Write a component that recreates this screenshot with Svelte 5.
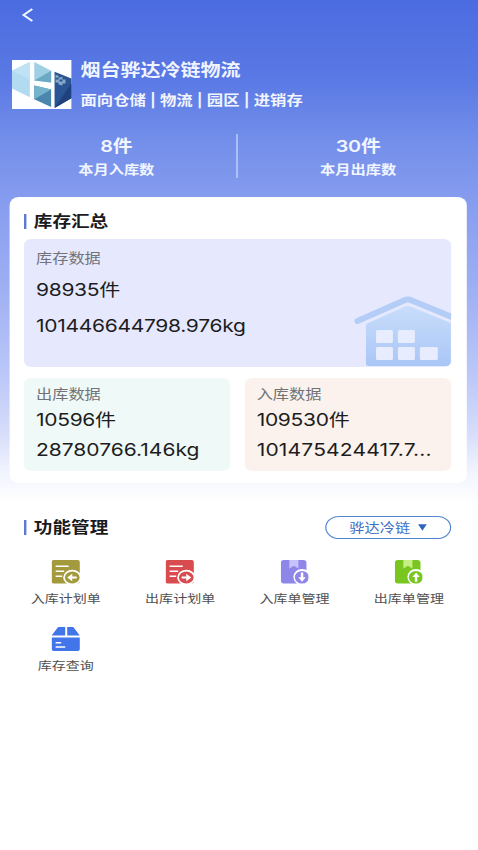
<script lang="ts">
	/**
	 * Warehouse dashboard
	 * Company header, monthly totals, stock summary and function shortcuts
	 */

	const monthly = [
		{ value: '8件', label: '本月入库数' },
		{ value: '30件', label: '本月出库数' }
	];

	const flows = [
		{ kind: 'out', label: '出库数据', count: '10596件', weight: '28780766.146kg' },
		{ kind: 'in', label: '入库数据', count: '109530件', weight: '101475424417.7...' }
	];

	const functions = [
		{ icon: 'plan-in', label: '入库计划单' },
		{ icon: 'plan-out', label: '出库计划单' },
		{ icon: 'order-in', label: '入库单管理' },
		{ icon: 'order-out', label: '出库单管理' },
		{ icon: 'stock', label: '库存查询' }
	];
</script>

<div class="screen">
	<header class="nav">
		<button class="back" aria-label="返回">
			<svg viewBox="0 0 12 16"><path d="M10.2 1.2 1.8 8l8.400 6.800" /></svg>
		</button>
	</header>

	<section class="company">
		<svg class="logo" viewBox="0 0 60 50" preserveAspectRatio="none">
			<rect width="60" height="50" fill="#fdfeff" />
			<path d="M0 11 18 2v36L0 29z" fill="#b2daf0" />
			<path d="M0 11 18 2v18z" fill="#bfe2f5" />
			<path d="M22.500 2 39.500 11v12l-17-2z" fill="#9fcfe3" />
			<path d="M39.500 11v12l-17-2z" fill="#6aaac5" />
			<path d="M22.500 26 39.500 30v18l-17-8z" fill="#4a86ad" />
			<path d="M22.500 26 39.500 30l-17 10z" fill="#74b3cc" />
			<path d="M43 12 60 19v20l-17 10z" fill="#2a5494" />
			<path d="M43 49 60 24v15z" fill="#1f417c" />
			<path d="M44 15l3 1v2l4-1v3h3v4h-3v2l-4-1v-2h-3z" fill="#86a9c6" />
			<path d="M44 18h3v2h-3zM48 20h3v2h-3z" fill="#2a5494" />
		</svg>
		<div>
			<h1>烟台骅达冷链物流</h1>
			<p>面向仓储 | 物流 | 园区 | 进销存</p>
		</div>
	</section>

	<section class="monthly">
		{#each monthly as item}
			<div class="month-item">
				<strong>{item.value}</strong>
				<span>{item.label}</span>
			</div>
		{/each}
	</section>

	<section class="card">
		<h2>库存汇总</h2>
		<div class="panel stock">
			<span class="label">库存数据</span>
			<span class="number">98935件</span>
			<span class="number">101446644798.976kg</span>
			<svg class="house" viewBox="0 0 98 74" preserveAspectRatio="none">
				<defs>
					<linearGradient id="house-body" x1="0" y1="0" x2="0" y2="1">
						<stop offset="0" stop-color="#c9ddfb" />
						<stop offset="1" stop-color="#a9c6f6" />
					</linearGradient>
				</defs>
				<path d="M3.500 28 50 7.500Q54 5.500 58 7.500L98 24" fill="none" stroke="#b4cdf7" stroke-width="6" stroke-linecap="round" />
				<path d="M12 31 51 13.500q3-1 6 0L97 30v40q0 3-3 3H15q-3 0-3-3z" fill="url(#house-body)" />
				<g fill="#e7edfe">
					<rect x="22" y="37" width="17" height="13" rx="1.500" />
					<rect x="44" y="37" width="17" height="13" rx="1.500" />
					<rect x="22" y="54" width="17" height="13" rx="1.500" />
					<rect x="44" y="54" width="17" height="13" rx="1.500" />
					<rect x="66" y="54" width="18" height="13" rx="1.500" />
				</g>
			</svg>
		</div>
		<div class="flows">
			{#each flows as flow}
				<div class="panel {flow.kind}">
					<span class="label">{flow.label}</span>
					<span class="number">{flow.count}</span>
					<span class="number weight">{flow.weight}</span>
				</div>
			{/each}
		</div>
	</section>

	<section class="functions">
		<div class="functions-head">
			<h2>功能管理</h2>
			<button class="picker">骅达冷链<svg viewBox="0 0 10 8"><path d="M.5 0h9L5 8z" /></svg></button>
		</div>
		<div class="grid">
			{#each functions as item}
				<div class="entry">
					<svg class="icon" viewBox="0 0 28 24" preserveAspectRatio="none">
						{#if item.icon === 'plan-in' || item.icon === 'plan-out'}
							<rect width="28" height="23.500" rx="2" fill={item.icon === 'plan-in' ? '#a29a3c' : '#d84c50'} />
							<path d="M4 6.300h13M4 11.300h8.500M4 16.300h6.500" stroke="#fff" stroke-width="1.500" />
							<ellipse cx="20.500" cy="17.500" rx="9" ry="7.700" fill="#fff" />
							<ellipse cx="20.500" cy="17.500" rx="7.300" ry="6" fill={item.icon === 'plan-in' ? '#a29a3c' : '#d84c50'} />
							{#if item.icon === 'plan-in'}
								<path d="M25 16.500h-4.500v-2.800L15.500 17.500l5 3.800v-2.800H25z" fill="#fff" />
							{:else}
								<path d="M16 16.500h4.500v-2.800l5 3.800-5 3.800v-2.800H16z" fill="#fff" />
							{/if}
						{:else if item.icon === 'stock'}
							<path d="M6.500 0h7v8.500H0zM15.500 0h6L28 8.500H15.500z" fill="#4375ea" />
							<path d="M0 10.500h28V22q0 2-2 2H2q-2 0-2-2z" fill="#4375ea" />
							<path d="M4 15.800h5.500M4 20h9.500" stroke="#fff" stroke-width="1.500" />
						{:else}
							<rect width="25.500" height="23.500" rx="3" fill={item.icon === 'order-in' ? '#8f86ea' : '#79c621'} />
							<path d="M8.500 0h9v8.500L13 5.800 8.500 8.500z" fill={item.icon === 'order-in' ? '#c8c2fa' : '#c5ee83'} />
							<ellipse cx="21" cy="17" rx="8.500" ry="8" fill="#fff" />
							<ellipse cx="21" cy="17.200" rx="7" ry="6.300" fill={item.icon === 'order-in' ? '#8f86ea' : '#79c621'} />
							{#if item.icon === 'order-in'}
								<path d="M19.900 12.500h2.400v4.800h2.500L21.100 21.800 17.400 17.300h2.500z" fill="#fff" />
							{:else}
								<path d="M19.900 21.800h2.400V17h2.500L21.100 12.500 17.400 17h2.500z" fill="#fff" />
							{/if}
						{/if}
					</svg>
					<span>{item.label}</span>
				</div>
			{/each}
		</div>
	</section>
</div>

<style>
	:global(body) {
		margin: 0;
		background: #fff;
		overflow: hidden;
	}

	.screen {
		box-sizing: border-box;
		width: 398.500px;
		height: 850px;
		transform: scaleX(1.2);
		transform-origin: 0 0;
		background: linear-gradient(180deg, #4b6ce1 0, #5a79e4 80px, #738fea 140px, #879def 205px, #9fb0f3 290px, #bdc9f8 380px, #d5dcfb 430px, #f3f5fe 475px, #fff 503px);
		font-family: Inter, 'Noto Sans CJK SC', sans-serif;
		color: #222;
	}

	h1,
	h2,
	p {
		margin: 0;
	}

	button {
		font: inherit;
		background: none;
		border: none;
		padding: 0;
	}

	.nav {
		height: 60px;
		padding: 7px 0 0 18px;
		box-sizing: border-box;
	}

	.back {
		display: block;
		width: 10.500px;
		height: 16px;
	}

	.back svg {
		display: block;
		width: 10.500px;
		height: 16px;
		fill: none;
		stroke: #f2f6ff;
		stroke-width: 2;
	}

	.company {
		display: flex;
		height: 49px;
		padding-left: 10px;
		gap: 7.500px;
		color: #f1f5ff;
	}

	.logo {
		width: 49.500px;
		height: 49px;
	}

	h1 {
		font-size: 16.700px;
		font-weight: 700;
		line-height: 21px;
	}

	.company p {
		margin-top: 9px;
		font-size: 13.650px;
		font-weight: 600;
		line-height: 20px;
		white-space: nowrap;
	}

	.monthly {
		display: grid;
		grid-template-columns: 198.300px 1fr;
		margin-top: 25px;
		height: 44px;
		color: #f1f5ff;
	}

	.month-item {
		display: flex;
		flex-direction: column;
		align-items: center;
		height: 44px;
		line-height: 24px;
	}

	.month-item:first-child {
		box-sizing: border-box;
		padding-right: 3.500px;
		border-right: 1.700px solid #cfdcff;
	}

	.month-item strong {
		font-size: 16.500px;
		font-weight: 600;
		letter-spacing: -0.200px;
	}

	.month-item span {
		font-size: 12.700px;
		font-weight: 700;
	}

	.card {
		box-sizing: border-box;
		height: 286px;
		margin: 19px 9.200px 0 8.300px;
		padding: 14px 13px 0 11.700px;
		border-radius: 8px;
		background: #fff;
	}

	h2 {
		display: flex;
		align-items: center;
		gap: 6px;
		font-size: 15.500px;
		font-weight: 700;
		line-height: 21px;
		color: #1b1b1d;
	}

	h2::before {
		content: '';
		width: 2.200px;
		height: 15px;
		background: #5b7bd0;
	}

	.panel {
		position: relative;
		box-sizing: border-box;
		display: flex;
		flex-direction: column;
		padding-left: 10px;
		border-radius: 6px;
		overflow: hidden;
	}

	.label {
		font-size: 13.500px;
		line-height: 20px;
		color: #727277;
	}

	.number {
		font-size: 17.500px;
		line-height: 30px;
		letter-spacing: -0.250px;
		white-space: nowrap;
		color: #1d1d21;
	}

	.stock {
		height: 128px;
		margin-top: 7px;
		padding-top: 9px;
		background: #e6e9fe;
	}

	.stock .number {
		line-height: 36px;
	}

	.stock .label {
		margin-bottom: 4px;
	}

	.flows .weight {
		letter-spacing: 0;
	}

	.in .weight {
		letter-spacing: 0.150px;
	}

	/* Watermark in the panel's corner */
	.house {
		position: absolute;
		right: 0;
		bottom: 0;
		width: 81.500px;
		height: 74px;
	}

	.flows {
		display: grid;
		grid-template-columns: 1fr 1fr;
		gap: 11.500px;
		margin-top: 11px;
	}

	.flows .panel {
		height: 93px;
		padding-top: 6px;
	}

	.flows .label {
		margin-bottom: 0.500px;
	}

	.out {
		background: #eff9f8;
	}

	.in {
		background: #fbf2ed;
	}

	.functions {
		padding-top: 33px;
	}

	.functions-head {
		display: flex;
		align-items: center;
		justify-content: space-between;
		height: 23px;
		padding: 0 22.500px 0 20px;
	}

	.picker {
		box-sizing: border-box;
		display: flex;
		align-items: center;
		justify-content: center;
		gap: 6px;
		width: 105px;
		height: 23px;
		border: 1.200px solid #5285d2;
		border-radius: 12px;
		font-size: 12.700px;
		line-height: 20px;
		color: #3c70c6;
	}

	.picker svg {
		width: 8px;
		height: 7px;
		fill: #2f66bd;
	}

	.grid {
		display: grid;
		grid-template-columns: repeat(4, 95.300px);
		grid-auto-rows: 67px;
		margin: 21px 0 0 7.200px;
	}

	.entry {
		display: flex;
		flex-direction: column;
		align-items: center;
		font-size: 11.700px;
		line-height: 20px;
		color: #505050;
	}

	.icon {
		width: 23.500px;
		height: 24px;
		margin-bottom: 4.500px;
	}
</style>
